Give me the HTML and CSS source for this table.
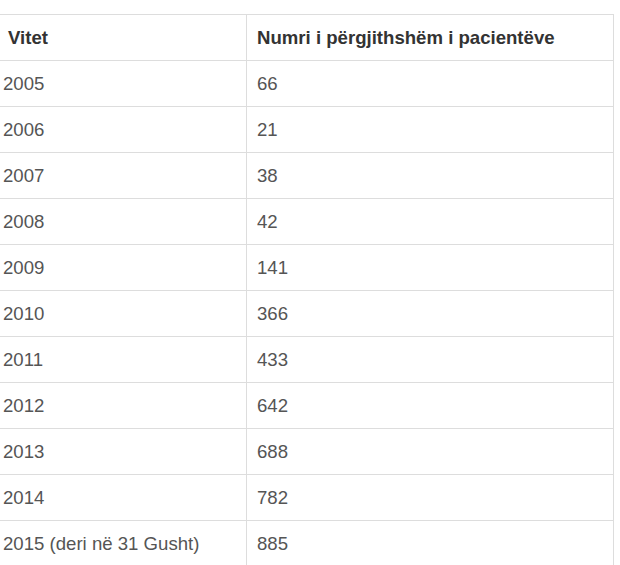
FILE: index.html
```html
<!DOCTYPE html>
<html lang="sq">
<head>
<meta charset="utf-8">
<link rel="stylesheet" href="styles.css">
</head>
<body>
<table class="stats">
  <thead>
    <tr><th class="col-year">Vitet</th><th class="col-num">Numri i përgjithshëm i pacientëve</th></tr>
  </thead>
  <tbody>
    <tr><td class="col-year">2005</td><td class="col-num">66</td></tr>
    <tr><td class="col-year">2006</td><td class="col-num">21</td></tr>
    <tr><td class="col-year">2007</td><td class="col-num">38</td></tr>
    <tr><td class="col-year">2008</td><td class="col-num">42</td></tr>
    <tr><td class="col-year">2009</td><td class="col-num">141</td></tr>
    <tr><td class="col-year">2010</td><td class="col-num">366</td></tr>
    <tr><td class="col-year">2011</td><td class="col-num">433</td></tr>
    <tr><td class="col-year">2012</td><td class="col-num">642</td></tr>
    <tr><td class="col-year">2013</td><td class="col-num">688</td></tr>
    <tr><td class="col-year">2014</td><td class="col-num">782</td></tr>
    <tr><td class="col-year">2015 (deri në 31 Gusht)</td><td class="col-num">885</td></tr>
  </tbody>
</table>
</body>
</html>
```
FILE: styles.css
```css
html, body {
  margin: 0;
  padding: 0;
  background: #ffffff;
}
body {
  padding-top: 14px;
  font-family: "Liberation Sans", Arial, sans-serif;
  font-size: 18.6px;
  color: #555555;
}
.stats {
  border-collapse: collapse;
  margin-left: -8px;
  width: 622px;
  table-layout: fixed;
}
.stats th,
.stats td {
  border: 1px solid #dddddd;
  height: 46px;
  box-sizing: border-box;
  padding: 0 10px;
  line-height: 24px;
  text-align: left;
  vertical-align: middle;
}
.stats th {
  font-weight: bold;
  color: #333333;
}
.stats .col-year {
  width: 254px;
  padding-left: 10px;
}
.stats th.col-year {
  padding-left: 15px;
}
```
